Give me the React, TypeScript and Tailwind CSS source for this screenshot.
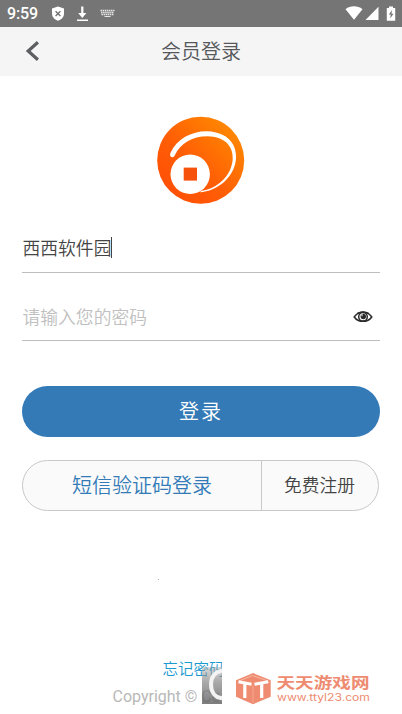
import React from 'react';

function StatusBar() {
  return (
    <div className="flex h-[27px] shrink-0 items-center bg-[#757575] pl-[7px] pr-[6px] text-white">
      <span className="w-[31px] whitespace-nowrap font-[Roboto,sans-serif] text-[16px] font-medium leading-[27px] tracking-[-0.1px]">9:59</span>
      <svg className="ml-[13px]" width="14" height="16" viewBox="0 0 14 16">
        <path d="M7 .4 13 2.600v5c0 3.600-2.500 6.100-6 7.200C3.500 13.700 1 11.200 1 7.600V2.600Z" fill="#fff" />
        <path d="m4.600 5.200 4.800 4.800M9.400 5.200l-4.800 4.800" stroke="#707070" strokeWidth="1.300" />
      </svg>
      <svg className="ml-[11px]" width="13" height="16" viewBox="0 0 13 16">
        <path d="M5.200 .5h2.200v6.500h3L6.300 12 2.200 7h3ZM1 13.600h11v1.500H1Z" fill="#fff" />
      </svg>
      <svg className="ml-[11px]" width="15" height="9" viewBox="0 0 15 9">
        <path d="M.5 1.500h14M1 3.500h13M1.500 5.500h12" stroke="#e5e5e5" strokeWidth="1.300" strokeDasharray="1.500 .6" />
        <path d="M4.500 7.500h6" stroke="#e5e5e5" />
      </svg>
      <svg className="ml-auto" width="18" height="15" viewBox="0 0 18 15">
        <path d="M.5 3.200C5.500-.6 12.500-.6 17.500 3.200L9 13.800Z" fill="#fff" />
      </svg>
      <svg className="ml-[2px]" width="14" height="15" viewBox="0 0 14 15">
        <path d="M13.500 .7v13.200H.5Z" fill="#fff" />
      </svg>
      <svg className="ml-[7px]" width="10" height="16" viewBox="0 0 10 16">
        <path d="M3 .5h4V2h2.200v12.800H.8V2H3Z" fill="#fff" />
        <path d="M6.200 4 2.800 8.500h2l-.6 4 3.300-4.800H5.400Z" fill="#707070" />
      </svg>
    </div>
  );
}

function Header() {
  return (
    <header className="grid h-[49px] shrink-0 grid-cols-[60px_1fr_60px] items-center bg-[#f5f5f6]">
      <svg className="mb-[2px] ml-[25px]" width="15" height="20" viewBox="0 0 15 20">
        <path d="M12.900 1.300 3.200 10l9.700 8.700" fill="none" stroke="#5c5e62" strokeWidth="3.200" />
      </svg>
      <h1 className="pb-[2px] text-center text-[20px] font-[350] leading-[47px] text-[#56585c]">会员登录</h1>
    </header>
  );
}

function Logo() {
  return (
    <svg className="ml-[156px] mt-[40px] block shrink-0" width="89" height="89" viewBox="-.7 -.3 89 89">
      <defs>
        <linearGradient id="coin" x1="0" y1="1" x2="1" y2="0">
          <stop offset="0" stopColor="#ff4a08" />
          <stop offset=".45" stopColor="#ff5e05" />
          <stop offset="1" stopColor="#ff9500" />
        </linearGradient>
      </defs>
      <circle cx="44" cy="44" r="43.500" fill="url(#coin)" />
      <path d="M13.600 37C20 22 36 14.500 51 15 71 16 80.500 28 79.300 43 77.500 61 61 75 43 76L45 74.500C61 72.500 75 59 76 43 76.800 29 67 20.300 51 20 35 20 23.500 27.500 18 39.300 16.500 42.500 12.300 41 13.600 37Z" fill="#fff" />
      <circle cx="33.500" cy="58" r="19.700" fill="#fff" />
      <rect x="27" y="51.300" width="13.300" height="13" fill="#f6520c" />
    </svg>
  );
}

function EyeIcon() {
  return (
    <svg className="mr-[7px] mt-[2px]" width="20" height="14" viewBox="0 0 20 14">
      <path d="M1.200 7C5.300.6 14.700.6 18.800 7 14.700 12.800 5.300 12.800 1.200 7Z" fill="#fff" stroke="#2b2b2b" strokeWidth="1.500" />
      <path d="M4.500 3.500Q10 .4 15.500 3.500" fill="none" stroke="#2b2b2b" strokeWidth="1.500" />
      <circle cx="10" cy="6.800" r="4.300" fill="#fff" stroke="#2b2b2b" strokeWidth="1.500" />
      <circle cx="10.300" cy="6.500" r="2.700" fill="#2b2b2b" />
      <path d="M9 3.800v2.400" stroke="#fff" strokeWidth="1" />
    </svg>
  );
}

function Watermark() {
  return (
    <>
      <div className="absolute left-[202px] top-[667px] h-[37px] w-[20px] overflow-hidden">
        <svg className="block" width="20" height="37" viewBox="0 0 20 37">
          <defs>
            <linearGradient id="metal" x1="0" y1="0" x2="0" y2="1">
              <stop offset="0" stopColor="#aaa" stopOpacity=".45" />
              <stop offset=".4" stopColor="#888" stopOpacity=".72" />
              <stop offset="1" stopColor="#5c5c5c" stopOpacity=".8" />
            </linearGradient>
          </defs>
          <rect width="20" height="37" fill="url(#metal)" />
          <path d="M23 3.500C13 3.500 9 10 9 17.500S13 31.500 23 31.500" fill="none" stroke="#f3f3f3" strokeWidth="4" />
        </svg>
      </div>
      <div className="absolute left-[222px] top-[654px] h-[60px] w-[180px] bg-white">
        <svg className="block" width="180" height="60" viewBox="0 0 180 60">
          <path d="M31 19 48.700 26.300v16.400L31 50.300 14 42.700V26.300Z" fill="#ee8b70" />
          <path d="m17 27 13.500-5.500L46 27" fill="none" stroke="#f7b8a5" strokeWidth="1" />
          <path d="m16.500 27.700 13 2.600M22.800 28.500v15.500M32.500 30.300l13.800-2.600M39.700 28.500v15.500" fill="none" stroke="#fff" strokeWidth="3.200" />
          <path d="M31 31.500V49" stroke="#f6ae99" strokeWidth=".8" />
          <text x="54.500" y="34.300" textLength="93" lengthAdjust="spacingAndGlyphs" fill="#ee8b70" fontFamily="'Noto Sans CJK SC', sans-serif" fontWeight="700" fontSize="15">天天游戏网</text>
          <text x="55" y="46.500" textLength="93" lengthAdjust="spacingAndGlyphs" fill="#ee8b70" fontFamily="Inter, sans-serif" fontWeight="400" fontSize="10">www.ttyl23.com</text>
        </svg>
      </div>
    </>
  );
}

export default function App() {
  return (
    <div className="relative flex h-[714px] w-[402px] flex-col overflow-hidden bg-white font-['Noto_Sans_CJK_SC',sans-serif] font-[350]">
      <StatusBar />
      <Header />
      <Logo />
      <main className="mx-[22px] mt-[18px]">
        <div className="flex h-[50px] items-center border-b border-[#bdbdbd]">
          <span className="pb-[1px] pl-[0.5px] text-[17.800px] leading-[26px] text-[#444]">西西软件园</span>
          <span className="mb-[1px] h-[21px] w-px bg-[#444]" />
        </div>
        <div className="mt-[18px] flex h-[50px] items-center justify-between border-b border-[#bdbdbd]">
          <span className="pl-[0.5px] text-[17.800px] leading-[26px] text-[#c0c0c0]">请输入您的密码</span>
          <EyeIcon />
        </div>
        <button className="mt-[45px] block h-[51px] w-full rounded-full bg-[#337ab7] pb-[1px] text-[20px] tracking-[2px] text-white">登录</button>
        <div className="mt-[23px] flex h-[51px] w-[357px] overflow-hidden rounded-full border border-[#c8c8c8] bg-[#fafafa]">
          <button className="w-[239px] border-r border-[#c8c8c8] pb-[1px] text-[20px] text-[#337ab7]">短信验证码登录</button>
          <button className="flex-1 pb-[2px] pr-[1px] text-[17.700px] text-[#444]">免费注册</button>
        </div>
      </main>
      <div className="ml-[158px] mt-[68px] h-px w-px shrink-0 bg-[#aaa]" />
      <footer className="mt-[76px] whitespace-nowrap">
        <a className="ml-[162.500px] block text-[15.500px] leading-[24px] text-[#1b9ad0]">忘记密码</a>
        <p className="ml-[112.500px] mt-[6px] font-[Roboto,sans-serif] text-[16px] font-normal leading-[22px] text-[#b8b8b8]">Copyright © Co</p>
      </footer>
      <Watermark />
    </div>
  );
}
